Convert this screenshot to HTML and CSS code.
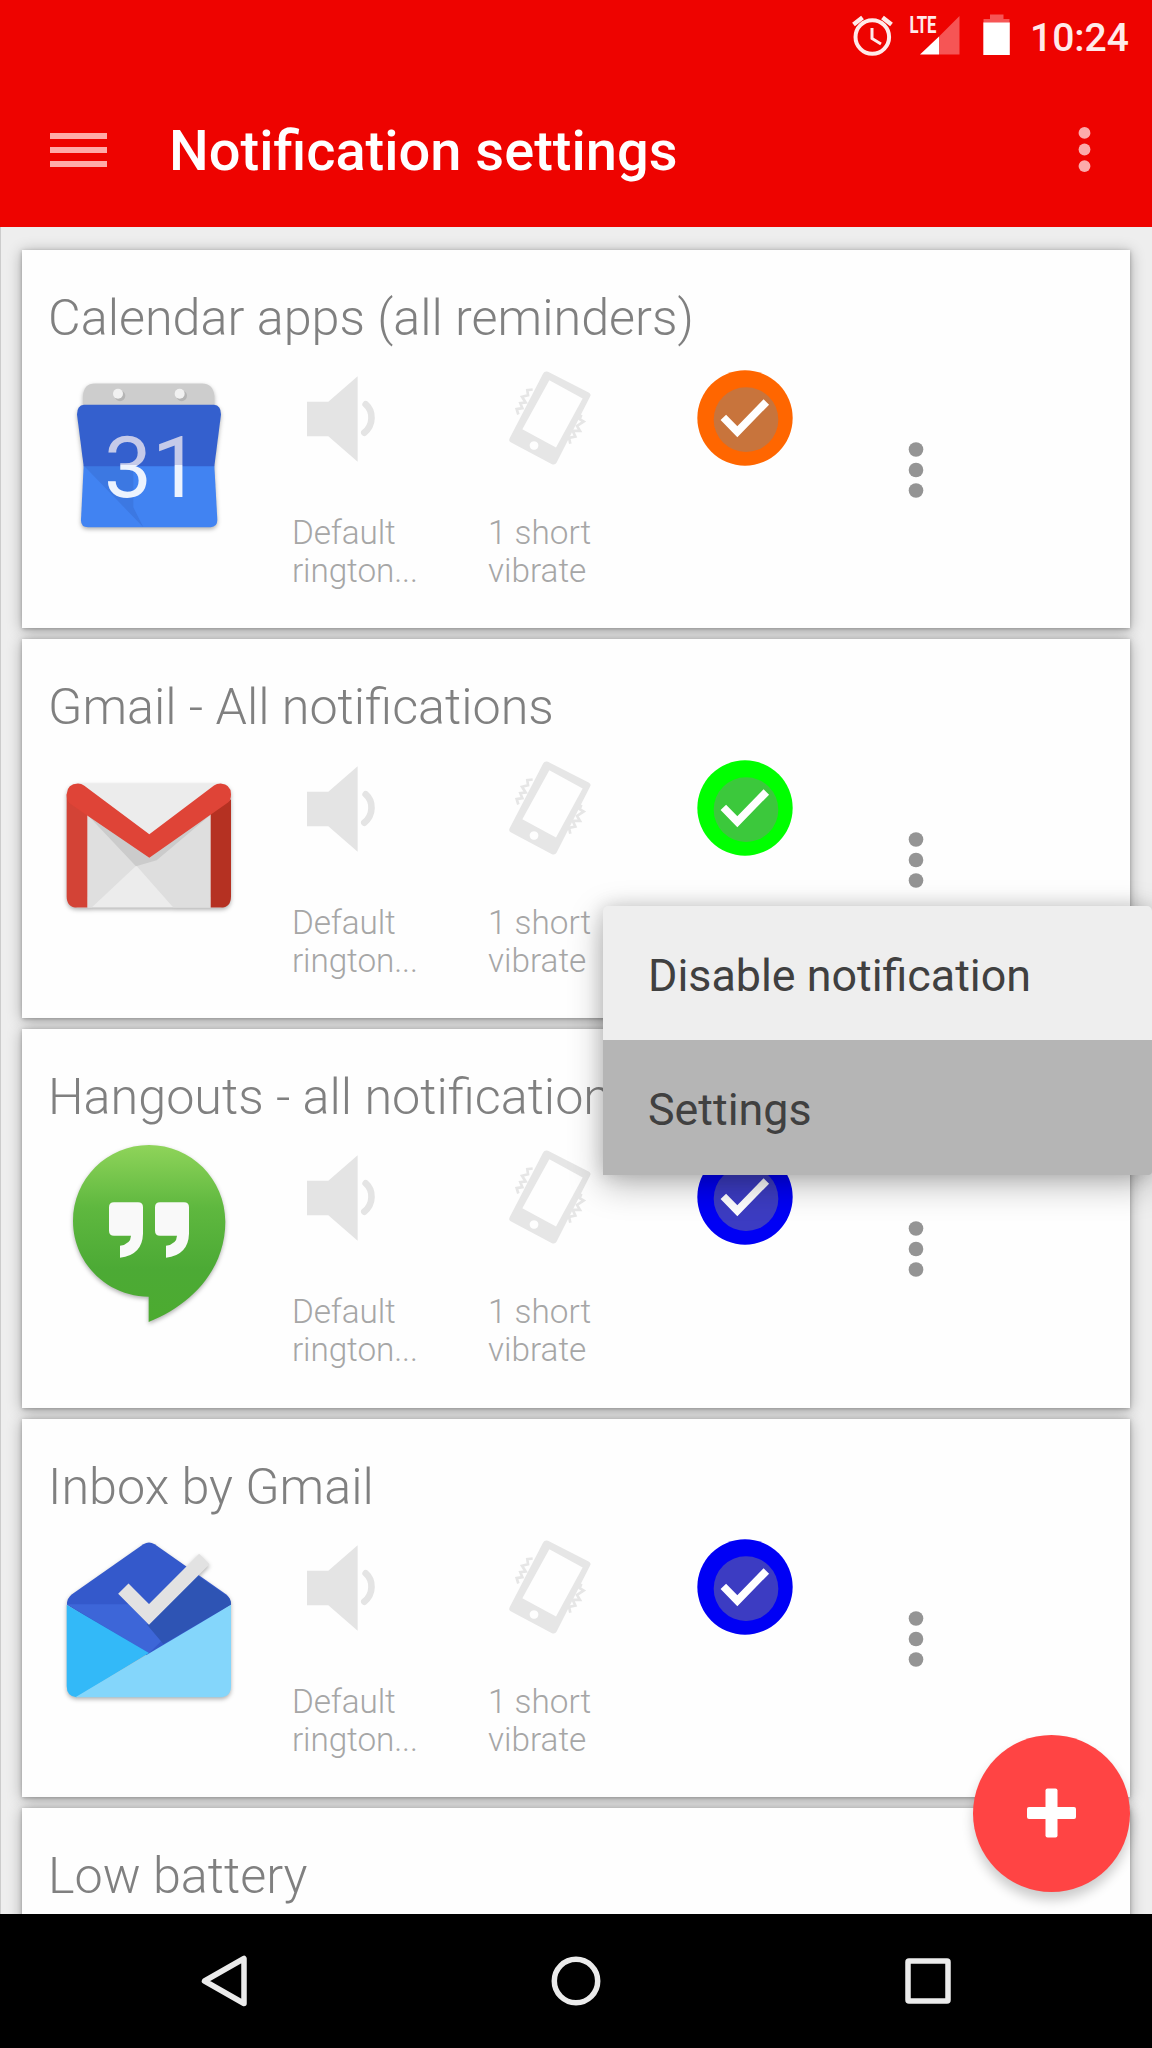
FILE: index.html
```html
<!DOCTYPE html>
<html lang="en">
<head>
  <meta charset="UTF-8">
  <meta name="viewport" content="width=device-width, initial-scale=1.0">
  <title>Notification settings</title>
  <link rel="stylesheet" href="styles.css">
</head>
<body>
  <!-- shared icons -->
  <svg class="defs" width="0" height="0">
    <symbol id="sound" viewBox="870 388 270 300">
      <path fill="#e4e4e4" d="M921 483h64l88-76v256l-88-76h-64z"/>
      <path fill="none" stroke="#e4e4e4" stroke-width="20" stroke-linecap="round" d="M1097 491C1121 512 1121 553 1093 576"/>
    </symbol>
    <symbol id="vibrate" viewBox="144 88.5 360 300">
      <path fill="#e6e6e6" fill-rule="evenodd" d="M324 94L446 156Q455 161 450 169L350 366Q345 375 336 371L212 305Q205 301 209 293L309 100Q314 90 324 94zM328 119L247 266L348 321L428 174zM282 302a13 13 0 1 0 .1 0z"/>
      <path fill="none" stroke="#e6e6e6" stroke-width="8" d="M278 147L262 149L264 164L246 169L257 186L241 188L247 203L230 206L235 222M424 223L419 236L431 243L411 256L420 271L398 271L406 288L387 292L391 310"/>
    </symbol>
    <symbol id="led" viewBox="772 89 288 288">
      <circle cx="916" cy="233" r="143" fill="currentColor"/>
      <circle cx="919" cy="238" r="97" fill="#848484" fill-opacity=".45"/>
      <path fill="none" stroke="#fff" stroke-width="23" d="M851 231L893 274L980 185"/>
    </symbol>
    <symbol id="dots" viewBox="0 0 16 58">
      <circle cx="8" cy="8.5" r="7.3"/>
      <circle cx="8" cy="29" r="7.3"/>
      <circle cx="8" cy="49.5" r="7.3"/>
    </symbol>
  </svg>

  <header>
    <div class="status">
      <svg width="270" height="60" viewBox="846 0 270 60" class="status-icons">
        <g fill="none" stroke="#ffeaea">
          <circle cx="872.3" cy="37" r="16.8" stroke-width="4"/>
          <path stroke-width="3" d="M872 28v10.5l9 5.5"/>
          <path stroke-width="4.5" d="M853.5 24.5l9-7M891.5 24.5l-9-7"/>
        </g>
        <text x="909.5" y="33" textLength="27" lengthAdjust="spacingAndGlyphs">LTE</text>
        <path fill="#f65555" d="M939 36.5L959.5 16v38.5H939z"/>
        <path fill="#fff" d="M920 54.5L939 36.5v18z"/>
        <path fill="#f65555" d="M990 14.5h13.5v4.5h6v4h-26v-4h6.5z"/>
        <path fill="#fff" d="M983.3 22.5h26.5v32.5h-26.5z"/>
      </svg>
      <span class="time">10:24</span>
    </div>
    <div class="toolbar">
      <div class="menu-icon"><i></i><i></i><i></i></div>
      <h1>Notification settings</h1>
      <svg class="more" width="13" height="47"><use href="#dots"/></svg>
    </div>
  </header>

  <main>
    <section class="card">
      <h2>Calendar apps (all reminders)</h2>
      <div class="row">
        <svg class="app" viewBox="180 358.5 540 570">
          <defs>
            <linearGradient id="calText" gradientUnits="userSpaceOnUse" x1="0" y1="580" x2="0" y2="770">
              <stop offset=".5" stop-color="#c5cae9"/>
              <stop offset=".5" stop-color="#edf3fe"/>
            </linearGradient>
          </defs>
          <path fill="#cdcdcd" d="M249 500v-35q3-36 35-36h322q33 0 37 36v35z"/>
          <circle cx="360" cy="466" r="16" fill="#b5b5b5"/><circle cx="545" cy="466" r="16" fill="#b5b5b5"/>
          <circle cx="354" cy="460" r="15" fill="#f1f1f1"/><circle cx="539" cy="460" r="15" fill="#f1f1f1"/>
          <path fill="#4183f2" d="M251 675H643L652 838Q652 860 632 860H264Q242 860 243 838z"/>
          <path fill="#3c78e2" d="M251 675H400L400 800L430 860z"/>
          <path fill="#3460ce" d="M252 493H642Q663 495 663 522L643 677H251L231 522Q231 495 252 493z"/>
          <text x="312" y="770" class="cal" fill="url(#calText)">31</text>
        </svg>
        <div class="opt sound">
          <svg width="90" height="100"><use href="#sound"/></svg>
          <p>Default<br>rington...</p>
        </div>
        <div class="opt">
          <svg width="120" height="100"><use href="#vibrate"/></svg>
          <p>1 short<br>vibrate</p>
        </div>
        <svg class="led orange" width="96" height="96"><use href="#led"/></svg>
        <svg class="dots" width="16" height="58"><use href="#dots"/></svg>
      </div>
    </section>

    <section class="card">
      <h2>Gmail - All notifications</h2>
      <div class="row">
        <svg class="app" viewBox="180 27.5 540 570">
          <path fill="#ececec" d="M230 128H664V500H230z"/>
          <path fill="#dfdfdf" d="M262 220L410 373L275 500H262z"/>
          <path fill="#dedede" d="M632 220V500H520L408 373L448 351z"/>
          <path fill="#cbcbcb" d="M262 222L448 340L632 222L470 358L408 376z"/>
          <path fill="#d34336" d="M200 160L262 205V500H232Q200 500 200 466z"/>
          <path fill="#b53122" d="M693 175L632 215V500H662Q693 500 693 466z"/>
          <path fill="#b23225" d="M205 184L262 222V206z"/>
          <path fill="#df4437" d="M200 160Q202 128 234 128Q244 128 252 134L448 280L642 134Q650 128 662 128Q693 130 693 160Q693 178 684 185L448 351L212 190Q200 182 200 160z"/>
        </svg>
        <div class="opt sound">
          <svg width="90" height="100"><use href="#sound"/></svg>
          <p>Default<br>rington...</p>
        </div>
        <div class="opt">
          <svg width="120" height="100"><use href="#vibrate"/></svg>
          <p>1 short<br>vibrate</p>
        </div>
        <svg class="led green" width="96" height="96"><use href="#led"/></svg>
        <svg class="dots" width="16" height="58"><use href="#dots"/></svg>
      </div>
    </section>

    <section class="card">
      <h2>Hangouts - all notifications</h2>
      <div class="row">
        <svg class="app" viewBox="180 356 540 570">
          <defs>
            <linearGradient id="hang" x1="0" y1="0" x2="0" y2="1">
              <stop offset="0" stop-color="#8fd45a"/>
              <stop offset=".35" stop-color="#5fb83f"/>
              <stop offset=".7" stop-color="#4caa35"/>
              <stop offset="1" stop-color="#4cab30"/>
            </linearGradient>
          </defs>
          <path fill="url(#hang)" d="M447 374C573 374 676 476 676 604C676 745 578 852 446 905V829C322 829 219 728 219 602C219 476 321 374 447 374z"/>
          <path id="quote" fill="#f9f9f9" d="M342 546H414Q429 546 429 561V640Q427 704 360 712V676Q392 671 393 646H342Q327 646 327 631V561Q327 546 342 546z"/>
          <use href="#quote" x="138"/>
        </svg>
        <div class="opt sound">
          <svg width="90" height="100"><use href="#sound"/></svg>
          <p>Default<br>rington...</p>
        </div>
        <div class="opt">
          <svg width="120" height="100"><use href="#vibrate"/></svg>
          <p>1 short<br>vibrate</p>
        </div>
        <svg class="led blue" width="96" height="96"><use href="#led"/></svg>
        <svg class="dots" width="16" height="58"><use href="#dots"/></svg>
      </div>
    </section>

    <section class="card">
      <h2>Inbox by Gmail</h2>
      <div class="row">
        <svg class="app" viewBox="180 85 540 570">
          <path fill="#3459cb" d="M201 312Q200 293 216 281L430 131Q447 120 464 131L678 281Q693 292 693 312L448 470z"/>
          <path fill="#3d66d8" d="M201 311H400L490 415L447 458z"/>
          <path fill="#2e54b4" d="M448 371L594 226L678 284Q693 294 693 312L490 430L440 371z"/>
          <path fill="#33b9f8" d="M200 312L447 457L230 590Q200 588 200 556z"/>
          <path fill="#84d6fb" d="M693 312V556Q693 590 659 590H226z"/>
          <path fill="none" stroke="#e2e2e2" stroke-width="44" d="M370 264L447 341L613 175"/>
        </svg>
        <div class="opt sound">
          <svg width="90" height="100"><use href="#sound"/></svg>
          <p>Default<br>rington...</p>
        </div>
        <div class="opt">
          <svg width="120" height="100"><use href="#vibrate"/></svg>
          <p>1 short<br>vibrate</p>
        </div>
        <svg class="led blue" width="96" height="96"><use href="#led"/></svg>
        <svg class="dots" width="16" height="58"><use href="#dots"/></svg>
      </div>
    </section>

    <section class="card">
      <h2>Low battery</h2>
    </section>
  </main>

  <nav>
    <svg width="60" height="60" viewBox="194 1951 60 60"><path d="M244 1958.5V2003.5L204.5 1981z"/></svg>
    <svg width="60" height="60"><circle cx="30" cy="30" r="21.7"/></svg>
    <svg width="60" height="60"><rect x="10" y="10" width="40" height="40" rx="1"/></svg>
  </nav>

  <div class="popup">
    <div class="item">Disable notification</div>
    <div class="item active">Settings</div>
  </div>

  <button class="fab">
    <svg width="50" height="50"><rect y="19" width="49" height="12" rx="2"/><rect x="18.5" y=".5" width="12" height="49" rx="2"/></svg>
  </button>
</body>
</html>
```
FILE: styles.css
```css
* {
  box-sizing: border-box;
}
body {
  margin: 0;
  width: 1152px;
  height: 2048px;
  position: relative;
  overflow: hidden;
  display: flex;
  flex-direction: column;
  font-family: Roboto, 'Liberation Sans', sans-serif;
  background-color: #eeeeee;
}
.defs {
  position: absolute;
}
h1, h2, p {
  margin: 0;
}

header {
  height: 227px;
  flex: none;
  background-color: #ee0300;
  color: #fff;
}
.status {
  height: 72px;
  display: flex;
  padding-left: 846px;
}
.status-icons {
  flex: none;
  margin-right: -86px;
}
.status-icons text {
  font-size: 23.5px;
  font-weight: bold;
  fill: #ffeaea;
}
.time {
  font-size: 39px;
  font-weight: 500;
  line-height: 76px;
  color: #ffeaea;
}
.toolbar {
  height: 155px;
  display: flex;
  align-items: center;
  padding: 0 61px 0 50px;
}
.menu-icon {
  width: 57px;
  display: flex;
  flex-direction: column;
  gap: 8px;
}
.menu-icon i {
  height: 6px;
  background-color: #ffaaa8;
}
h1 {
  flex: 1;
  margin-left: 62px;
  padding-top: 2px;
  font-size: 56px;
  font-weight: 500;
  line-height: 64px;
}
.more {
  fill: #fcaaaa;
}

main {
  flex: 1;
  min-height: 0;
  overflow: hidden;
  padding: 22.5px 22px 0 21px;
  border-left: 1px solid #cccccc;
  display: flex;
  flex-direction: column;
  gap: 11px;
}
.card {
  flex: none;
  height: 378.7px;
  padding-top: 38px;
  background-color: #fefefe;
  box-shadow: 0 1px 4px rgba(0, 0, 0, .26), 0 2px 14px rgba(0, 0, 0, .3);
}
h2 {
  margin-left: 26px;
  font-size: 50.3px;
  font-weight: 300;
  line-height: 60px;
  color: #808080;
}
.row {
  margin: 12.5px 0 0 38px;
  display: grid;
  grid-template-columns: 230px 198px 209px 96px auto;
  align-items: start;
}
.app {
  width: 180px;
  height: 190px;
  filter: drop-shadow(0 2px 2px rgba(0, 0, 0, .3));
}
.cal {
  font-size: 256px;
}
.opt {
  padding-top: 10px;
}
.opt svg {
  display: block;
}
.opt p {
  margin-top: 44px;
  font-size: 33.3px;
  font-weight: 300;
  line-height: 38px;
  color: #a6a6a6;
}
.sound p {
  margin-left: 2px;
  letter-spacing: -.1px;
}
.led {
  margin-top: 10px;
}
.orange { color: #ff6600; }
.green { color: #00ff00; }
.blue { color: #0000f5; }
.dots {
  margin: 81px 0 0 115px;
  fill: #949494;
}

nav {
  height: 134px;
  flex: none;
  display: flex;
  justify-content: space-between;
  align-items: center;
  padding: 0 194px;
  background-color: #000;
}
nav svg {
  fill: none;
  stroke: #ebebeb;
  stroke-width: 5.5;
  stroke-linejoin: round;
}

.popup {
  position: absolute;
  top: 905.5px;
  left: 603px;
  width: 549px;
  border-radius: 5px 5px 3px 0;
  overflow: hidden;
  background-color: #eeeeee;
  box-shadow: 0 10px 34px rgba(0, 0, 0, .28), 0 0 18px rgba(0, 0, 0, .14);
}
.item {
  height: 134.5px;
  padding-left: 45px;
  font-size: 44.8px;
  line-height: 139px;
  color: #404040;
}
.active {
  background-color: #b5b5b5;
}

.fab {
  position: absolute;
  left: 973px;
  top: 1734.5px;
  width: 157px;
  height: 157px;
  border: 0;
  padding: 0;
  border-radius: 50%;
  display: flex;
  align-items: center;
  justify-content: center;
  background-color: #ff4444;
  box-shadow: 0 8px 12px rgba(0, 0, 0, .2);
}
.fab svg {
  fill: #fff;
}
```
